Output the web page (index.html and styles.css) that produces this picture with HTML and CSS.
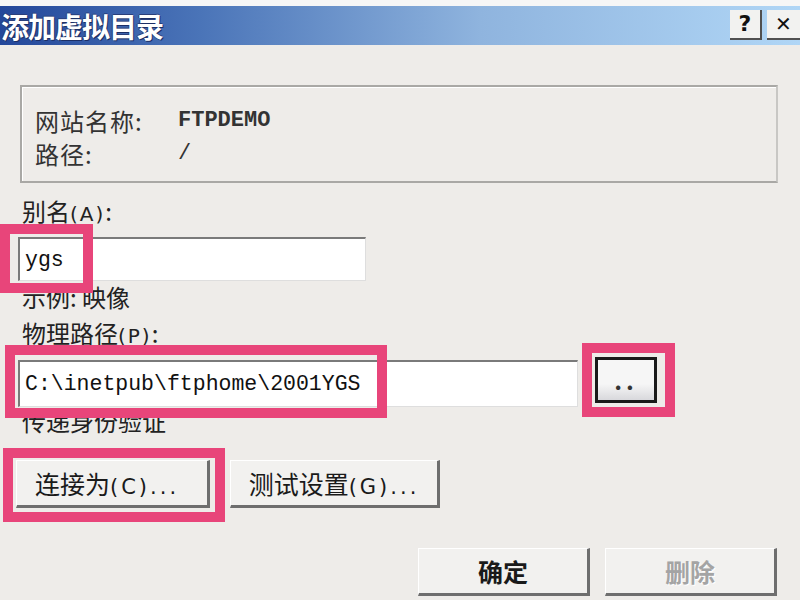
FILE: index.html
```html
<!DOCTYPE html>
<html>
<head>
    <meta charset="UTF-8">
    <title>添加虚拟目录</title>
    <link rel="stylesheet" href="styles.css">
</head>
<body>
    <div class="dialog">
        <div class="top-strip"></div>

        <!-- Заголовок окна -->
        <div class="title-bar">
            <span class="title-text">添加虚拟目录</span>
            <div class="title-btns">
                <span class="title-btn">?</span>
                <span class="title-btn close">✕</span>
            </div>
        </div>

        <!-- Сведения о сайте -->
        <div class="info-group">
            <div class="info-row"><span class="info-key">网站名称:</span><span class="info-val bold">FTPDEMO</span></div>
            <div class="info-row"><span class="info-key">路径:</span><span class="info-val">/</span></div>
        </div>

        <div class="label label-alias">别名<span class="key">(A)</span>:</div>
        <div class="field field-alias"><span class="mono">ygs</span></div>
        <div class="label label-sample">示例: 映像</div>

        <div class="label label-path">物理路径<span class="key">(P)</span>:</div>
        <div class="path-row">
            <div class="field field-path"><span class="mono">C:\inetpub\ftphome\2001YGS</span></div>
            <div class="browse-btn">..</div>
        </div>
        <div class="label label-auth">传递身份验证</div>

        <div class="btn-row">
            <div class="btn btn-connect">连接为<span class="key">(C)...</span></div>
            <div class="btn btn-test">测试设置<span class="key">(G)...</span></div>
        </div>

        <div class="btn-row bottom">
            <div class="btn btn-ok">确定</div>
            <div class="btn btn-del disabled">删除</div>
        </div>

        <!-- Розовые рамки-выделения поверх полей -->
        <div class="mark mark-alias"></div>
        <div class="mark mark-path"></div>
        <div class="mark mark-browse"></div>
        <div class="mark mark-connect"></div>
    </div>
</body>
</html>
```

FILE: styles.css
```css
body {
    margin: 0;
    background-color: #eeece9;
    font-family: "Noto Sans CJK SC", "Noto Sans", sans-serif;
    color: #1a1a1a;
}
.dialog {
    position: relative;
    width: 800px;
    height: 600px;
    overflow: hidden;
    background-color: #eeece9;
}
.top-strip {
    height: 6px;
    background-color: #f6f6f6;
}

/* Заголовок с градиентом */
.title-bar {
    height: 39px;
    display: flex;
    align-items: center;
    justify-content: space-between;
    background: linear-gradient(to right, #23479a 0%, #4a74b8 25%, #8fb4de 60%, #b0d6f6 100%);
}
.title-text {
    color: #fff;
    font-size: 28px;
    font-weight: bold;
    line-height: 1;
    letter-spacing: -1px;
    margin-left: 1px;
    text-shadow: 1px 1px 0 #1c2f66, -1px 0 0 #2a3f7a, 0 -1px 0 #2a3f7a;
}
.title-btns {
    display: flex;
    gap: 5px;
    align-self: flex-start;
    margin-top: 4px;
}
.title-btn {
    width: 30px;
    height: 28px;
    background-color: #f2f2f0;
    border-right: 2px solid #505050;
    border-bottom: 2px solid #505050;
    font-family: "DejaVu Sans", sans-serif;
    font-weight: bold;
    font-size: 22px;
    line-height: 28px;
    text-align: center;
    color: #111;
}
.title-btn.close {
    width: 33px;
    border-right: none;
    font-size: 20px;
}

/* Рамка со сведениями */
.info-group {
    margin: 40px 22px 0 20px;
    height: 98px;
    border: 2px solid #a9a8a5;
    border-right-color: #c8c7c4;
    box-shadow: inset 1px 1px 0 #fff;
    padding-top: 17px;
    padding-left: 13px;
    box-sizing: border-box;
}
.info-row {
    display: flex;
    height: 33px;
    align-items: center;
    font-size: 24px;
    letter-spacing: 1px;
    color: #333;
}
.info-key {
    width: 143px;
}
.info-val {
    font-family: "Liberation Mono", monospace;
    font-size: 22px;
    letter-spacing: 0;
}
.bold {
    font-weight: bold;
}

.label {
    font-size: 24px;
    line-height: 26px;
    height: 26px;
    margin-left: 22px;
    color: #222;
    white-space: nowrap;
}
.key {
    font-family: "DejaVu Sans", sans-serif;
    font-size: 20px;
    letter-spacing: 2px;
}
.label-alias {
    margin-top: 15px;
}
.label-sample {
    margin-top: 3px;
}
.label-path {
    margin-top: 10px;
}
.label-auth {
    margin-top: 1px;
}

/* Поля ввода */
.field {
    background-color: #fff;
    border-top: 2px solid #7a7a7a;
    border-left: 2px solid #7a7a7a;
    border-right: 1px solid #dedede;
    border-bottom: 1px solid #dedede;
    display: flex;
    align-items: center;
    padding-left: 5px;
    box-sizing: border-box;
}
.mono {
    font-family: "Liberation Mono", monospace;
    font-size: 21.5px;
    color: #111;
}
.field-alias {
    margin: 13px 0 0 18px;
    width: 348px;
    height: 44px;
}
.path-row {
    display: flex;
    align-items: flex-start;
    height: 50px;
    margin: 11px 0 0 18px;
}
.field-path {
    margin-top: 3px;
    width: 560px;
    height: 47px;
}
.browse-btn {
    margin-left: 17px;
    width: 62px;
    height: 46px;
    box-sizing: border-box;
    border: 3px solid #1a1a1a;
    background: linear-gradient(to bottom, #f6f6f6 60%, #d8d8dc 100%);
    font-size: 24px;
    font-weight: bold;
    letter-spacing: 4px;
    line-height: 40px;
    text-align: center;
    color: #333;
}

/* Кнопки */
.btn-row {
    display: flex;
    gap: 20px;
    margin: 26px 0 0 16px;
}
.btn-row.bottom {
    margin: 40px 0 0 418px;
    gap: 15px;
}
.btn {
    height: 48px;
    box-sizing: border-box;
    background-color: #f2f1ef;
    border-top: 1px solid #fff;
    border-left: 1px solid #fff;
    border-right: 3px solid #6e6e6e;
    border-bottom: 3px solid #6e6e6e;
    font-size: 25px;
    line-height: 44px;
    color: #1a1a1a;
    text-align: center;
    white-space: nowrap;
}
.btn .key {
    font-size: 21px;
    letter-spacing: 3px;
}
.btn-connect {
    width: 194px;
    text-align: left;
    padding-left: 18px;
}
.btn-test {
    width: 210px;
}
.btn-ok,
.btn-del {
    width: 172px;
    font-weight: bold;
}
.btn.disabled {
    color: #a4a4a4;
    text-shadow: 1px 1px 0 #fff;
}

/* Розовые рамки */
.mark {
    position: absolute;
    border: 10px solid #e8457a;
    box-sizing: border-box;
}
.mark-alias {
    left: 0;
    top: 224px;
    width: 93px;
    height: 69px;
}
.mark-path {
    left: 5px;
    top: 345px;
    width: 382px;
    height: 73px;
}
.mark-browse {
    left: 582px;
    top: 343px;
    width: 93px;
    height: 74px;
}
.mark-connect {
    left: 3px;
    top: 448px;
    width: 222px;
    height: 74px;
}
```
